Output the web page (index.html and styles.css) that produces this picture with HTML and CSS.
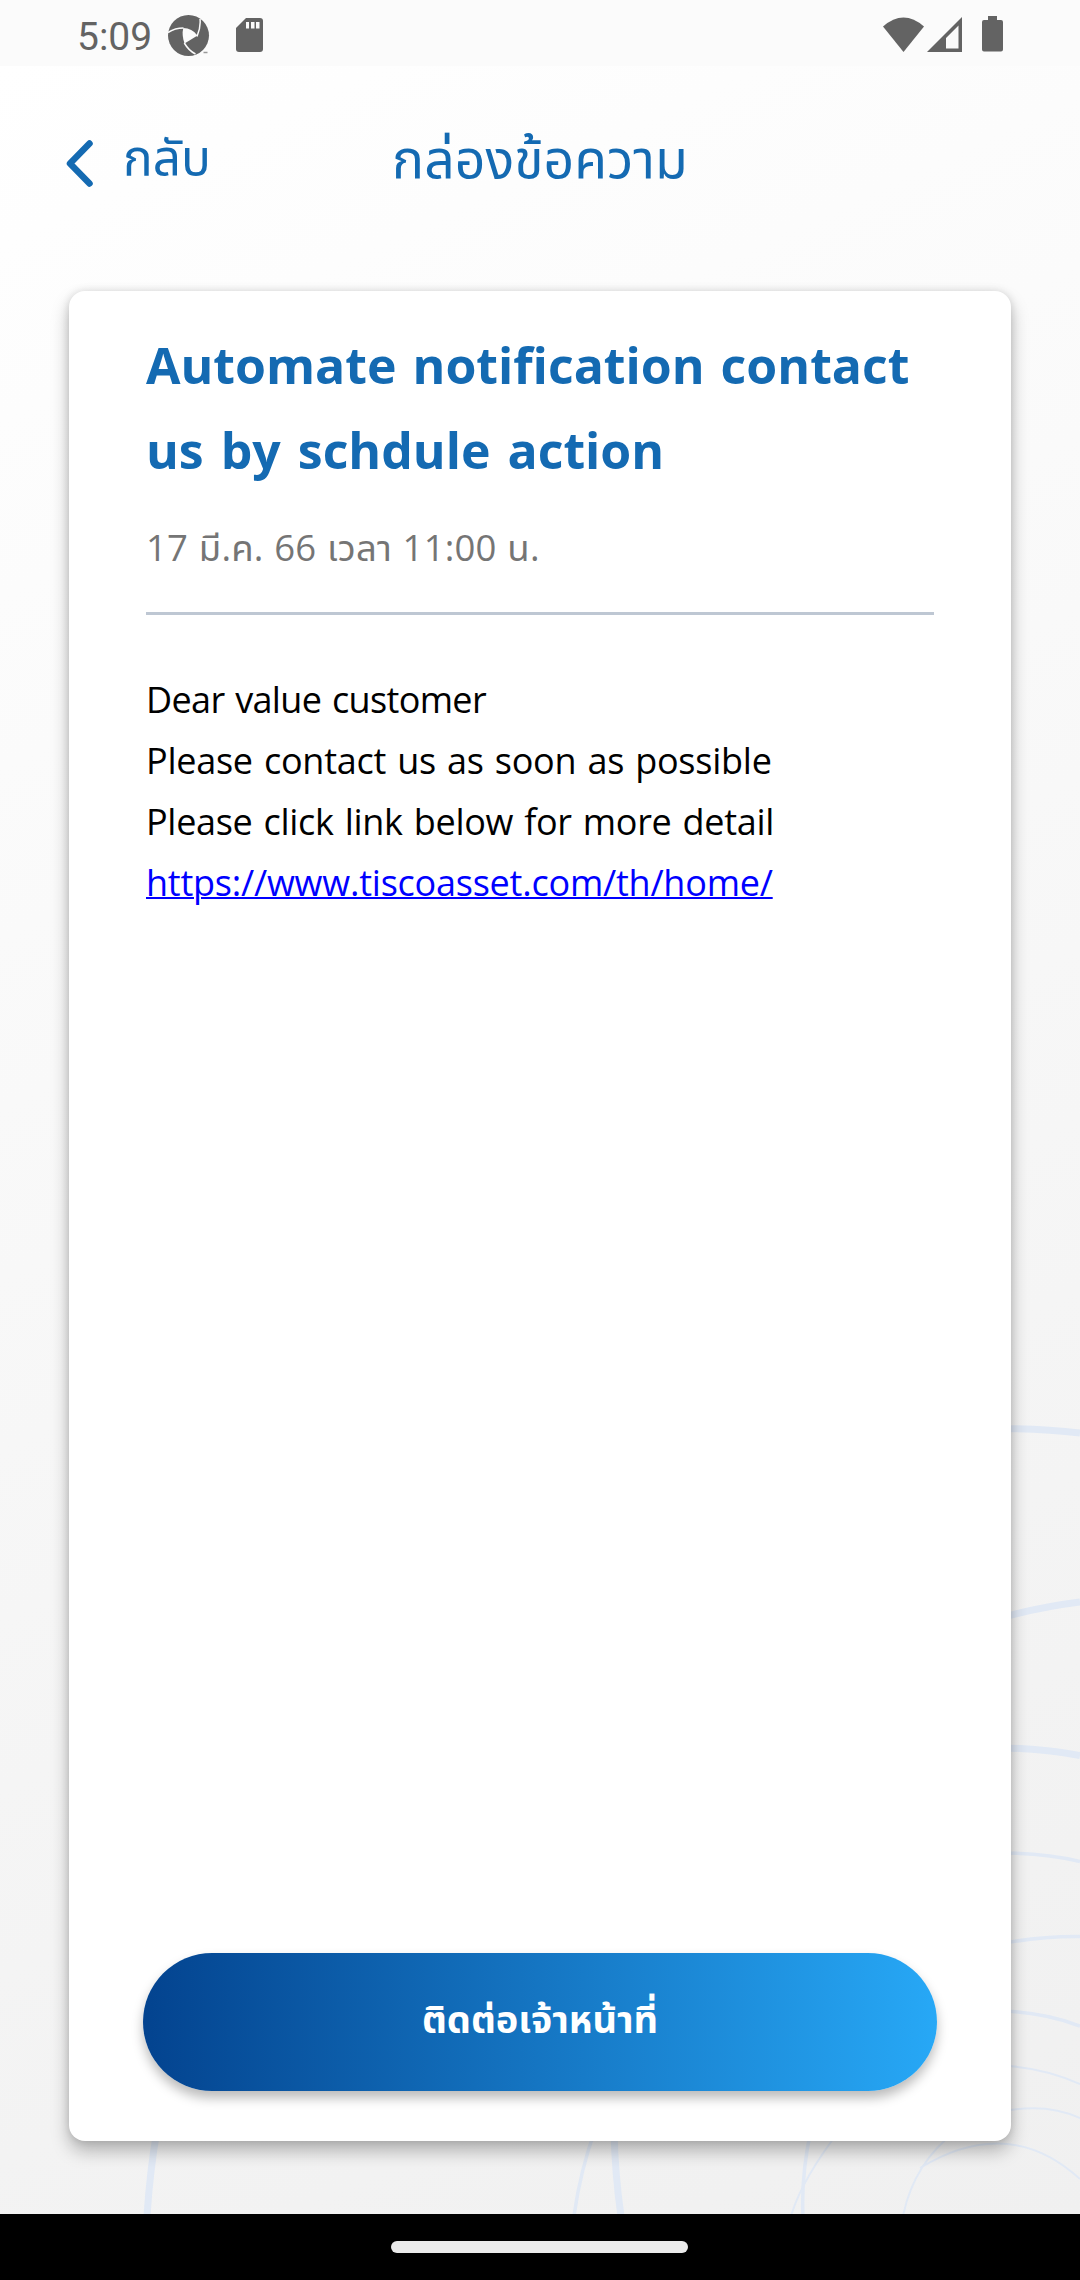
FILE: index.html
```
<!DOCTYPE html>
<html lang="th">
<head>
<meta charset="utf-8">
<title>กล่องข้อความ</title>
<link rel="stylesheet" href="styles.css">
</head>
<body>
<div class="screen">
  <header class="status">
    <span class="time">5:09</span>
    <svg class="app-icon" width="42" height="42" viewBox="0 0 42 42">
      <circle cx="20.5" cy="20.5" r="20.5" fill="#636363"/>
      <path d="M15.3 13Q24 13 29.5 20.500Q24 24 16.500 28.500Q13.500 20 15.300 13Z" fill="#fbfbfb"/>
      <path d="M0 17.500Q7 13 15.500 13M32 4Q33 12 29 21.500M16.300 28Q21 36 27.500 39" fill="none" stroke="#fbfbfb" stroke-width="1.500"/>
      <path d="M35.500 37.500h4" stroke="#999" stroke-width="1.500"/>
    </svg>
    <svg class="sd-icon" width="27" height="34" viewBox="0 0 27 34">
      <path d="M10 0h14a3 3 0 0 1 3 3v28a3 3 0 0 1-3 3H3a3 3 0 0 1-3-3V10Z" fill="#636363"/>
      <path d="M10 4h3v6.500h-3zM15 4h3.500v6.500H15zM20 4h3.500v6.500H20z" fill="#fbfbfb"/>
    </svg>
    <span class="spacer"></span>
    <svg class="wifi" width="41" height="35" viewBox="0 0 41 35"><path d="M0 9.500Q20.500-8.500 41 9.500L20.500 35Z" fill="#636363"/></svg>
    <svg class="signal" width="35" height="35" viewBox="0 0 35 35"><path fill-rule="evenodd" d="M35 0V35H0ZM31.500 8.500L19 21v10.500h12.500Z" fill="#636363"/></svg>
    <svg class="battery" width="21" height="36" viewBox="0 0 21 36"><path d="M6 0h9v4h4a2 2 0 0 1 2 2v27.500a2 2 0 0 1-2 2H2a2 2 0 0 1-2-2V6a2 2 0 0 1 2-2h4Z" fill="#636363"/></svg>
  </header>

  <main class="page">
    <svg class="swirls" width="1080" height="2148" viewBox="0 66 1080 2148">
      <g fill="none" stroke="#e1e9f5">
        <g stroke-width="7">
          <path d="M1000 1428.500Q1045 1429 1080 1433"/>
          <path d="M1000 1618Q1040 1607 1080 1602"/>
          <path d="M1000 1748Q1040 1748 1080 1755.500"/>
          <path d="M157 2130Q150 2170 147 2216"/>
          <path d="M614 2130Q615 2175 621 2216"/>
        </g>
        <g stroke-width="3.500">
          <path d="M1000 1853Q1045 1853 1080 1861.500"/>
          <path d="M1000 1944Q1040 1936 1080 1936.500"/>
          <path d="M1000 2011Q1042 2012 1080 2026"/>
          <path d="M595 2130Q580 2172 574 2216"/>
          <path d="M811 2130Q801 2175 803 2216"/>
        </g>
        <g stroke-width="2">
          <path d="M1000 2065.500Q1042 2067 1080 2084"/>
          <path d="M1000 2112Q1045 2102 1080 2118"/>
          <path d="M920 2168Q1009 2114 1080 2179"/>
          <path d="M955 2132Q914 2163 903 2216"/>
          <path d="M840 2130Q802 2179 791 2216"/>
        </g>
      </g>
    </svg>

    <nav class="topbar">
      <a class="back">
        <svg width="30" height="50" viewBox="0 0 30 50"><path d="M24.500 4.500L5 24.500L24.500 44.500" fill="none" stroke="#146ab2" stroke-width="6.500" stroke-linecap="round" stroke-linejoin="round"/></svg>
        <span class="back-text">กลับ</span>
      </a>
      <h1 class="heading">กล่องข้อความ</h1>
    </nav>

    <article class="card">
      <h2 class="title"><span class="t1">Automate notification contact</span><br><span class="t2">us by schdule action</span></h2>
      <p class="date">17 มี.ค. 66 เวลา 11:00 น.</p>
      <hr class="rule">
      <div class="message">
        <p class="m1">Dear value customer</p>
        <p class="m2">Please contact us as soon as possible</p>
        <p class="m3">Please click link below for more detail</p>
        <p class="m4"><a class="link">https://www.tiscoasset.com/th/home/</a></p>
      </div>
      <button class="contact"><span class="contact-text">ติดต่อเจ้าหน้าที่</span></button>
    </article>
  </main>

  <footer class="gesture"><span class="pill"></span></footer>
</div>
</body>
</html>
```
FILE: styles.css
```
* { box-sizing: border-box; margin: 0; padding: 0; }
body { width: 1080px; font-family: "Open Sans", "Noto Sans Thai", "Noto Sans", sans-serif; }
.screen { width: 1080px; height: 2280px; display: flex; flex-direction: column; overflow: hidden; }
.screen svg { flex: none; display: block; }

.status { height: 66px; flex: none; display: flex; align-items: flex-start; padding: 0 77px 0 77px; background: #fbfbfb; }
.time { width: 91px; font: 39px/46px Roboto, sans-serif; color: #636363; padding-top: 14px; }
.app-icon { margin-top: 15px; }
.sd-icon { margin: 18px 0 0 26px; }
.spacer { flex: 1; }
.wifi { margin-top: 17px; }
.signal { margin: 17px 0 0 3px; }
.battery { margin: 16px 0 0 20px; }

.page { position: relative; flex: 1; display: flex; flex-direction: column; background: linear-gradient(155deg, #fff 0%, #fcfcfc 20%, #f5f5f5 65%, #f0f0f0 100%); }
.swirls { position: absolute; inset: 0; }

.topbar { position: relative; height: 225px; flex: none; display: grid; grid-template-columns: 300px 480px 300px; padding-top: 58px; color: #146ab2; }
.back { display: flex; padding-left: 65px; }
.back svg { margin-top: 15px; }
.back-text { margin-left: 28px; font-size: 49.5px; line-height: 66px; white-space: nowrap; }
.heading { font-size: 53.5px; line-height: 68px; font-weight: 400; text-align: center; white-space: nowrap; }

.card { position: relative; display: flex; flex-direction: column; width: 942px; height: 1850px; margin-left: 69px; padding: 32px 74px 50px 77px; border-radius: 16px; background: #fff; box-shadow: 0 10px 18px rgba(0,0,0,.27), 0 0 8px rgba(0,0,0,.12); }
.title { font-size: 50px; line-height: 85px; font-weight: 700; color: #146ab2; white-space: nowrap; word-spacing: 3px; }
.t2 { word-spacing: 4px; }
.date { margin-top: 24px; font-size: 36.5px; line-height: 60px; color: #757575; white-space: nowrap; letter-spacing: .2px; word-spacing: 1px; }
.rule { width: 788px; height: 3px; margin-top: 35px; border: 0; background: #bec7d3; }
.message { margin-top: 54px; font-size: 36px; line-height: 61px; color: #000; white-space: nowrap; word-spacing: 2px; }
.m1 { letter-spacing: -.65px; }
.m2 { letter-spacing: -.25px; }
.m3 { letter-spacing: -.3px; }
.m4 { letter-spacing: -.23px; }
.link { color: #00f; text-decoration: underline; text-decoration-thickness: 2px; }
.contact { width: 794px; height: 138px; margin: auto 0 0 -3px; padding-bottom: 8px; border: 0; border-radius: 69px; background: linear-gradient(90deg, #03438f, #27a8f6); color: #fff; font: 700 38px/60px "Open Sans", "Noto Sans Thai", sans-serif; box-shadow: 0 7px 12px rgba(0,0,0,.27); white-space: nowrap; }

.gesture { height: 66px; flex: none; display: flex; align-items: flex-start; justify-content: center; padding: 27px 2px 0 0; background: #000; }
.pill { width: 297px; height: 12px; border-radius: 6px; background: #ebebeb; }
```
